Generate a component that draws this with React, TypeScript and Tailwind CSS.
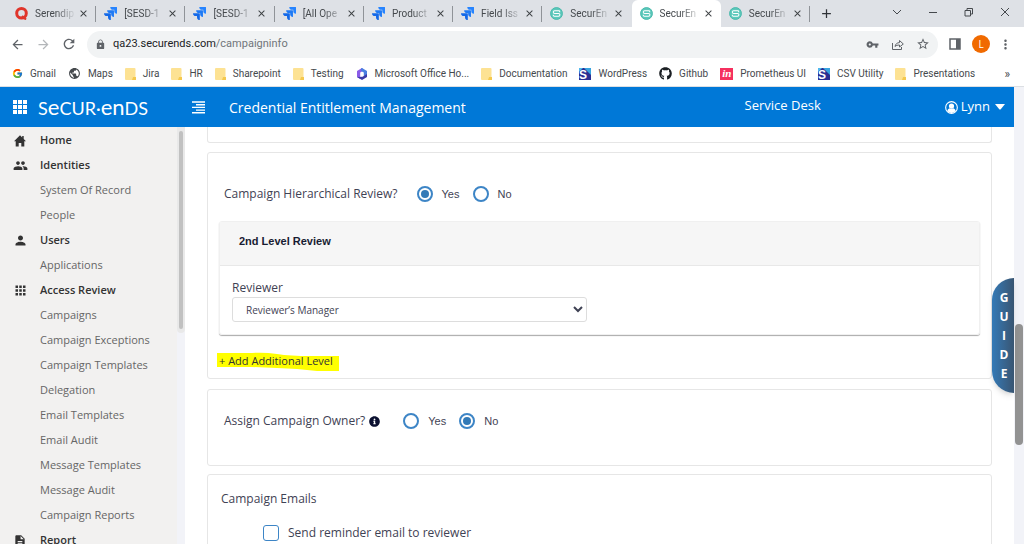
import type { ComponentType, ReactNode } from 'react'
import { FaGithub, FaInfoCircle } from 'react-icons/fa'
import { FcGoogle } from 'react-icons/fc'
import {
  MdAdd,
  MdApps,
  MdArrowBack,
  MdArrowForward,
  MdClose,
  MdDescription,
  MdLock,
  MdMoreVert,
  MdPeople,
  MdPerson,
  MdPublic,
  MdRefresh,
  MdStarBorder,
  MdVpnKey,
} from 'react-icons/md'

function SerendipityIcon() {
  return (
    <svg viewBox="0 0 13 13" className="size-[13px]">
      <circle cx="6.5" cy="6.3" r="4.8" fill="none" stroke="#e0352b" strokeWidth="3" />
      <path d="M7 9l4 3.6" stroke="#e0352b" strokeWidth="2" />
    </svg>
  )
}

function JiraIcon() {
  return (
    <svg viewBox="0 0 24 24" className="size-[13px]">
      <path fill="#2684ff" d="M23.3 0H11.6a5.2 5.2 0 0 0 5.2 5.2H19v2.1a5.2 5.2 0 0 0 5.2 5.2V1a1 1 0 0 0-.9-1z" />
      <path fill="#1f7af5" d="M17.5 5.8H5.8A5.2 5.2 0 0 0 11 11h2.2v2.1a5.2 5.2 0 0 0 5.2 5.2V6.8a1 1 0 0 0-.9-1z" />
      <path fill="#1469e8" d="M11.7 11.6H0a5.2 5.2 0 0 0 5.2 5.2h2.2v2a5.2 5.2 0 0 0 5.2 5.2V12.6a1 1 0 0 0-.9-1z" />
    </svg>
  )
}

function SecurEndsIcon() {
  return (
    <svg viewBox="0 0 14 14" className="size-[13px]">
      <circle cx="7" cy="7" r="6.4" fill="#5cc8bb" stroke="#45b8aa" />
      <path
        d="M10.5 5.6V5a1 1 0 0 0-1-1H5a1.4 1.4 0 0 0 0 2.900h4.200a1.500 1.500 0 0 1 0 3H4.500a1 1 0 0 1-1-1v-.6"
        fill="none"
        stroke="#fff"
        strokeWidth="1.1"
      />
    </svg>
  )
}

function FolderIcon() {
  return (
    <svg viewBox="0 0 11 12" className="h-3 w-[11px]">
      <rect width="10.5" height="12" rx="1" fill="#fde293" />
      <path d="M8 9h3v3H7z" fill="#f5c94e" />
    </svg>
  )
}

function OfficeIcon() {
  return (
    <svg viewBox="0 0 12 12" className="size-3">
      <path d="M6 0 1 3v6l3.2 2V4.600L8 2.200z" fill="#8a5be8" />
      <path d="M5 .6 6 0l5 3v4.500L7.800 8V4.600L5 3z" fill="#4a7fe0" />
      <path d="M1 9l5 3 5-3V6L6.500 8.800z" fill="#3b3ba8" />
    </svg>
  )
}

function SIcon() {
  return (
    <svg viewBox="0 0 12 12" className="size-3">
      <rect width="12" height="12" fill="#2b2f92" />
      <path d="M5 0h7v7z" fill="#38a3e0" />
      <path d="M0 0h4L0 4z" fill="#4fb8ee" />
      <text x="0" y="10.5" fontSize="12" fontWeight="700" fill="#fff" fontFamily="Liberation Sans">S</text>
    </svg>
  )
}

function PrometheusIcon() {
  return (
    <span className="flex h-3 w-[13px] items-center justify-center bg-[#f5305f] pb-px font-['Liberation_Serif',serif] text-[11px] leading-none font-bold text-white italic">
      in
    </span>
  )
}

function HomeIcon() {
  return (
    <svg viewBox="0 0 12 12" className="size-3" fill="currentColor">
      <path d="M6 .3 0 6.3h1.7v5.200h3V8h2.600v3.500h3V6.300H12L9.700 4V1H8.200v1.500z" />
    </svg>
  )
}

function GridIcon() {
  return (
    <svg viewBox="0 0 14 14" className="size-[14px]" fill="currentColor">
      {[0, 5, 10].map((y) => [0, 5, 10].map((x) => <rect key={`${x}-${y}`} x={x} y={y} width="4" height="4" />))}
    </svg>
  )
}

const TABS: { title: string; icon: ComponentType }[] = [
  { title: 'Serendip', icon: SerendipityIcon },
  { title: '[SESD-1', icon: JiraIcon },
  { title: '[SESD-1', icon: JiraIcon },
  { title: '[All Ope', icon: JiraIcon },
  { title: 'Product', icon: JiraIcon },
  { title: 'Field Iss', icon: JiraIcon },
  { title: 'SecurEn', icon: SecurEndsIcon },
  { title: 'SecurEn', icon: SecurEndsIcon },
  { title: 'SecurEn', icon: SecurEndsIcon },
]
const ACTIVE_TAB = 7

const BOOKMARKS: { label: string; icon: ReactNode }[] = [
  { label: 'Gmail', icon: <FcGoogle size={11} /> },
  { label: 'Maps', icon: <MdPublic size={13} /> },
  { label: 'Jira', icon: <FolderIcon /> },
  { label: 'HR', icon: <FolderIcon /> },
  { label: 'Sharepoint', icon: <FolderIcon /> },
  { label: 'Testing', icon: <FolderIcon /> },
  { label: 'Microsoft Office Ho...', icon: <OfficeIcon /> },
  { label: 'Documentation', icon: <FolderIcon /> },
  { label: 'WordPress', icon: <SIcon /> },
  { label: 'Github', icon: <FaGithub size={13} className="text-[#1b1f23]" /> },
  { label: 'Prometheus UI', icon: <PrometheusIcon /> },
  { label: 'CSV Utility', icon: <SIcon /> },
  { label: 'Presentations', icon: <FolderIcon /> },
]

const NAV: { label: string; icon?: ReactNode }[] = [
  { label: 'Home', icon: <HomeIcon /> },
  { label: 'Identities', icon: <MdPeople size={15} /> },
  { label: 'System Of Record' },
  { label: 'People' },
  { label: 'Users', icon: <MdPerson size={15} /> },
  { label: 'Applications' },
  { label: 'Access Review', icon: <MdApps size={15} /> },
  { label: 'Campaigns' },
  { label: 'Campaign Exceptions' },
  { label: 'Campaign Templates' },
  { label: 'Delegation' },
  { label: 'Email Templates' },
  { label: 'Email Audit' },
  { label: 'Message Templates' },
  { label: 'Message Audit' },
  { label: 'Campaign Reports' },
  { label: 'Report', icon: <MdDescription size={14} /> },
]

function TabStrip() {
  return (
    <div className="flex h-[27px] shrink-0 bg-[#dee1e6] pl-[7px]">
      <div className="grid w-[803px] grid-cols-9">
        {TABS.map((tab, i) => {
          const active = i === ACTIVE_TAB
          const divider = !active && i !== ACTIVE_TAB - 1
          return (
            <div
              key={i}
              className={`flex items-center pl-2 ${active ? 'rounded-t-md bg-white' : ''}`}
            >
              <tab.icon />
              <div className="ml-[7px] w-[41px]">
                <span className="block mask-r-from-50% font-['Roboto',sans-serif] text-[10px] whitespace-nowrap text-[#45494d]">
                  {tab.title}
                </span>
              </div>
              <button aria-label="Close tab" className="ml-0.5 text-[#3c4043]">
                <MdClose size={11} className="stroke-current" />
              </button>
              {divider && <span className="ml-auto h-4 w-px bg-[#8f9398]" />}
            </div>
          )
        })}
      </div>
      <button aria-label="New tab" className="ml-[9px] text-[#2f3337]">
        <MdAdd size={15} />
      </button>
      <div className="mr-[14px] ml-auto flex items-center gap-[26px] pb-1 text-[#45494d]">
        <button aria-label="Search tabs">
          <svg viewBox="0 0 10 10" className="size-[10px]" fill="none" stroke="currentColor">
            <path d="M1 3l4 4 4-4" />
          </svg>
        </button>
        <button aria-label="Minimize">
          <svg viewBox="0 0 10 10" className="size-[10px]" fill="none" stroke="currentColor">
            <path d="M1 5.5h8" />
          </svg>
        </button>
        <button aria-label="Restore">
          <svg viewBox="0 0 10 10" className="size-[10px]" fill="none" stroke="currentColor">
            <path d="M1 3.5h5.5v5.5H1zM3 3.500V1.500h5.500v5.500h-2" />
          </svg>
        </button>
        <button aria-label="Close window">
          <svg viewBox="0 0 10 10" className="size-[10px]" fill="none" stroke="currentColor">
            <path d="M1 1l8 8M9 1l-8 8" />
          </svg>
        </button>
      </div>
    </div>
  )
}

function Toolbar() {
  return (
    <div className="flex h-[34px] shrink-0 items-center bg-white pr-[11px] pl-[10px] text-[#5f6368]">
      <button aria-label="Back"><MdArrowBack size={15} /></button>
      <button aria-label="Forward" className="ml-[11px] text-[#b4b7ba]"><MdArrowForward size={15} /></button>
      <button aria-label="Reload" className="ml-[10px]"><MdRefresh size={16} /></button>
      <div className="ml-[10px] flex h-[27px] flex-1 items-center rounded-full bg-[#f1f3f4] px-2">
        <MdLock size={11} />
        <div className="ml-[7px] font-['Roboto',sans-serif] text-[11px] text-[#202124]">
          qa23.securends.com<span className="text-[#70757a]">/campaigninfo</span>
        </div>
        <div className="ml-auto flex items-center gap-3">
          <MdVpnKey size={13} />
          <svg viewBox="0 0 13 13" className="size-[13px]" fill="none" stroke="currentColor">
            <path d="M1.5 5v6.5h9V9M4 8.5C4.5 6 6 4.700 8.500 4.600V2.500L12.300 6 8.500 9V7C6.500 7 5 7.500 4 8.500z" />
          </svg>
          <MdStarBorder size={14} />
        </div>
      </div>
      <button aria-label="Side panel" className="ml-[11px]">
        <svg viewBox="0 0 12 12" className="size-3">
          <path d="M1 1h10v10H1z" fill="none" stroke="currentColor" strokeWidth="1.5" />
          <path d="M7 1h4v10H7z" fill="currentColor" />
        </svg>
      </button>
      <button className="ml-[11px] size-[18px] rounded-full bg-[#f06a00] text-[10px] text-white">L</button>
      <button aria-label="Menu" className="ml-2"><MdMoreVert size={15} /></button>
    </div>
  )
}

function Bookmarks() {
  return (
    <div className="flex h-[25px] shrink-0 items-center bg-white pr-[14px] pl-3 font-['Roboto',sans-serif] text-[10px] text-[#45494d]">
      <div className="flex gap-3">
        {BOOKMARKS.map((b) => (
          <a key={b.label} href="#" className="flex items-center gap-[7px] whitespace-nowrap">
            {b.icon}
            {b.label}
          </a>
        ))}
      </div>
      <button aria-label="More bookmarks" className="ml-auto text-[12px]">»</button>
    </div>
  )
}

function AppHeader() {
  return (
    <header className="flex h-10 shrink-0 items-center bg-[#0078d7] pr-[9px] pl-[13px] text-white">
      <GridIcon />
      <a href="#" aria-label="SECUR-ENDS" className="ml-[11px] flex w-[154px] items-baseline font-['Lato',sans-serif] text-[18px] leading-5">
        S<span className="text-[22px]">e</span>CUR·<span className="text-[22px]">en</span>DS
      </a>
      <button aria-label="Toggle menu">
        <svg viewBox="0 0 13 13" className="size-[13px]" stroke="currentColor" strokeWidth="1.4">
          <path d="M0 1h13M4 3.7h9M0 6.400h13M4 9.100h9M0 11.800h13" />
        </svg>
      </button>
      <h1 className="ml-6 text-[14px]">Credential Entitlement Management</h1>
      <a href="#" className="mr-[124px] ml-auto pb-0.5 text-[13px]">Service Desk</a>
      <button className="flex items-center gap-[3px] text-[13px]">
        <svg viewBox="0 0 14 14" className="size-[13px]">
          <circle cx="7" cy="7" r="6.3" fill="none" stroke="currentColor" strokeWidth="1.2" />
          <circle cx="7" cy="5.5" r="2.8" fill="currentColor" />
          <path d="M2.5 10.8C3 8.800 4.200 8 5.200 7.800q1.800 1.200 3.600 0c1 .2 2.200 1 2.700 3Q9.500 13 7 13t-4.500-2.200z" fill="currentColor" />
        </svg>
        Lynn
        <svg viewBox="0 0 10 6" className="ml-0.5 h-[6px] w-[10px]" fill="currentColor">
          <path d="M0 0h10L5.5 5.6h-1z" />
        </svg>
      </button>
    </header>
  )
}

function Sidebar() {
  return (
    <aside className="flex w-[185px] shrink-0 bg-[#f2f3f8]">
      <nav className="w-[177px] bg-[#f2f1f0] pt-px text-[11px]">
        {NAV.map((item) => (
          <a
            key={item.label}
            href="#"
            className={`flex h-[25px] items-center ${item.icon ? 'font-semibold text-[#333]' : 'text-[#666]'}`}
          >
            <span className="flex w-10 justify-center">{item.icon}</span>
            {item.label}
          </a>
        ))}
      </nav>
      <div className="flex h-[206px] w-2 justify-center rounded-b bg-[#e9e9e9] py-1">
        <div className="w-1 rounded-full bg-[#c1c1c1]" />
      </div>
    </aside>
  )
}

function Radio({ name, label, checked }: { name: string; label: string; checked?: boolean }) {
  return (
    <label className="flex items-center gap-[9px] font-['Liberation_Sans',sans-serif] text-[11px]">
      <input
        type="radio"
        name={name}
        defaultChecked={checked}
        className="size-4 appearance-none rounded-full border-2 border-[#3d85c6] bg-white bg-clip-content p-[2px] checked:bg-[#337ab7]"
      />
      {label}
    </label>
  )
}

function Card({ className, children }: { className: string; children?: ReactNode }) {
  return <section className={`shrink-0 rounded-[3px] border border-[#e6e6e6] ${className}`}>{children}</section>
}

function CampaignForm() {
  return (
    <main className="flex flex-1 flex-col overflow-hidden bg-white px-[22px] text-[12px] text-[#3f4254]">
      <Card className="h-4 rounded-t-none border-t-0" />

      <Card className="mt-[9px] px-[11px] pt-[30px] pb-2">
        <fieldset className="flex h-[22px] items-center pl-[5px]">
          <span>Campaign Hierarchical Review?</span>
          <div className="ml-[19px] flex gap-[13px]">
            <Radio name="hierarchical" label="Yes" checked />
            <Radio name="hierarchical" label="No" />
          </div>
        </fieldset>
        <div className="mt-4 rounded-[3px] border border-[#f0f0f0] shadow-[0_1px_1px_#aaa]">
          <h2 className="h-[44px] border-b border-[#e8e8e8] bg-[#f6f6f6] px-[19px] pt-[11px] font-['Liberation_Sans',sans-serif] text-[11px] leading-4 font-bold text-[#181c32]">
            2nd Level Review
          </h2>
          <div className="p-3">
            <label htmlFor="reviewer" className="block leading-[19px]">Reviewer</label>
            <select
              id="reviewer"
              className="block h-[25px] w-[355px] rounded-[3px] border border-[#ddd] bg-white pl-[9px] text-[10px]"
            >
              <option>Reviewer’s Manager</option>
            </select>
          </div>
        </div>
        <button className="relative mt-[17px] flex h-[18px] items-center text-[11px] text-[#333]">
          <svg viewBox="0 0 122 19" className="absolute -left-0.5 h-[19px] w-[122px]" fill="#ffff00">
            <path d="M0 1h35q12-1 25 1t34 2h28v15H100l-20-2-20-1-25-1H0z" />
          </svg>
          <span className="relative">+ Add Additional Level</span>
        </button>
      </Card>

      <Card className="mt-[10px] h-[77px] pt-5">
        <fieldset className="flex h-[22px] items-center pl-4">
          <span>Assign Campaign Owner?</span>
          <FaInfoCircle size={11} className="ml-1 text-[#0b1030]" />
          <div className="ml-[23px] flex gap-[13px]">
            <Radio name="owner" label="Yes" />
            <Radio name="owner" label="No" checked />
          </div>
        </fieldset>
      </Card>

      <Card className="mt-2 h-24 px-[13px] pt-[15px]">
        <h2 className="leading-[18px]">Campaign Emails</h2>
        <label className="mt-4 ml-[42px] flex items-center gap-[9px] leading-[18px]">
          <input type="checkbox" className="size-4 appearance-none rounded-[3px] border border-[#3d85c6] bg-white" />
          Send reminder email to reviewer
        </label>
      </Card>
    </main>
  )
}

export default function App() {
  return (
    <div className="flex h-screen flex-col overflow-hidden bg-white font-['Open_Sans',sans-serif]">
      <TabStrip />
      <Toolbar />
      <Bookmarks />
      <div className="relative flex min-h-0 flex-1 border-t border-[#dcdfe3]">
        <div className="flex min-w-0 flex-1 flex-col">
          <AppHeader />
          <div className="flex min-h-0 flex-1">
            <Sidebar />
            <CampaignForm />
          </div>
        </div>
        <div className="w-[10px] bg-[#f2f3f8] px-px pt-[237px]">
          <div className="h-[121px] rounded-full bg-[#929292]" />
        </div>
        <button className="absolute top-[191px] right-[10px] flex h-[115px] w-[22px] flex-col items-center justify-center rounded-l-full bg-linear-to-r from-[#337ab7] to-[#385572] pl-0.5 text-[12px] leading-[19px] font-bold text-white shadow-md">
          {'GUIDE'.split('').map((c) => (
            <span key={c}>{c}</span>
          ))}
        </button>
      </div>
    </div>
  )
}
